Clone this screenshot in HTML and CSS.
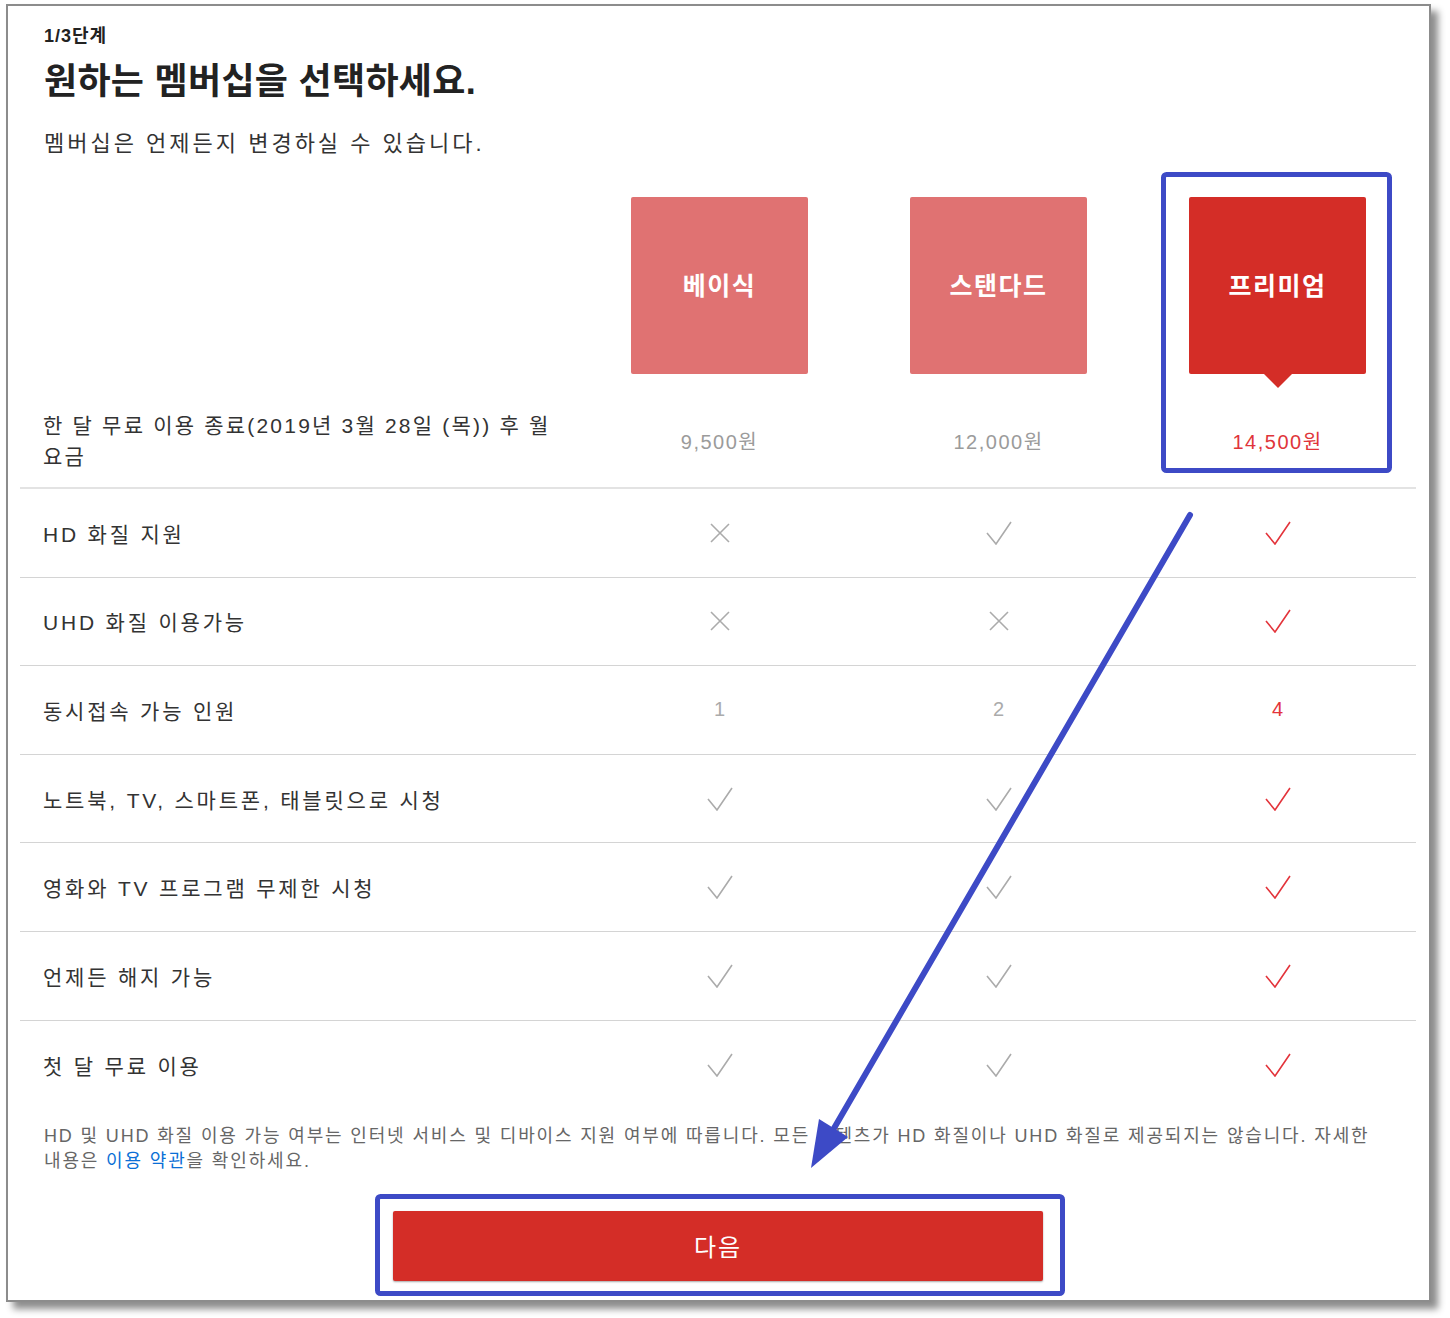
FILE: index.html
```html
<!DOCTYPE html>
<html lang="ko">
<head>
<meta charset="utf-8">
<title>멤버십 선택</title>
<link rel="stylesheet" href="styles.css">
</head>
<body>
<div class="frame">
  <div class="head">
    <div class="step">1/3단계</div>
    <h1 class="title">원하는 멤버십을 선택하세요.</h1>
    <p class="sub">멤버십은 언제든지 변경하실 수 있습니다.</p>
  </div>
  <div class="table">
    <div class="row plans">
      <div class="label"></div>
      <div class="cell"><div class="plan">베이식</div></div>
      <div class="cell"><div class="plan">스탠다드</div></div>
      <div class="cell"><div class="plan on">프리미엄</div></div>
    </div>
    <div class="row price">
      <div class="label tight">한 달 무료 이용 종료(2019년 3월 28일 (목)) 후 월<br>요금</div>
      <div class="cell val">9,500원</div>
      <div class="cell val">12,000원</div>
      <div class="cell val red">14,500원</div>
    </div>
    <div class="row feat">
      <div class="label">HD 화질 지원</div>
      <div class="cell gray"><svg class="x" width="20" height="20" viewBox="0 0 20 20"><path d="M1 1L19 19M19 1L1 19"/></svg></div>
      <div class="cell gray"><svg class="ck" width="26" height="24" viewBox="0 0 26 24"><path d="M1 12L10 23L25 1"/></svg></div>
      <div class="cell red"><svg class="ck" width="26" height="24" viewBox="0 0 26 24"><path d="M1 12L10 23L25 1"/></svg></div>
    </div>
    <div class="row feat">
      <div class="label">UHD 화질 이용가능</div>
      <div class="cell gray"><svg class="x" width="20" height="20" viewBox="0 0 20 20"><path d="M1 1L19 19M19 1L1 19"/></svg></div>
      <div class="cell gray"><svg class="x" width="20" height="20" viewBox="0 0 20 20"><path d="M1 1L19 19M19 1L1 19"/></svg></div>
      <div class="cell red"><svg class="ck" width="26" height="24" viewBox="0 0 26 24"><path d="M1 12L10 23L25 1"/></svg></div>
    </div>
    <div class="row feat">
      <div class="label">동시접속 가능 인원</div>
      <div class="cell gray num">1</div>
      <div class="cell gray num">2</div>
      <div class="cell red num">4</div>
    </div>
    <div class="row feat">
      <div class="label">노트북, TV, 스마트폰, 태블릿으로 시청</div>
      <div class="cell gray"><svg class="ck" width="26" height="24" viewBox="0 0 26 24"><path d="M1 12L10 23L25 1"/></svg></div>
      <div class="cell gray"><svg class="ck" width="26" height="24" viewBox="0 0 26 24"><path d="M1 12L10 23L25 1"/></svg></div>
      <div class="cell red"><svg class="ck" width="26" height="24" viewBox="0 0 26 24"><path d="M1 12L10 23L25 1"/></svg></div>
    </div>
    <div class="row feat">
      <div class="label">영화와 TV 프로그램 무제한 시청</div>
      <div class="cell gray"><svg class="ck" width="26" height="24" viewBox="0 0 26 24"><path d="M1 12L10 23L25 1"/></svg></div>
      <div class="cell gray"><svg class="ck" width="26" height="24" viewBox="0 0 26 24"><path d="M1 12L10 23L25 1"/></svg></div>
      <div class="cell red"><svg class="ck" width="26" height="24" viewBox="0 0 26 24"><path d="M1 12L10 23L25 1"/></svg></div>
    </div>
    <div class="row feat">
      <div class="label">언제든 해지 가능</div>
      <div class="cell gray"><svg class="ck" width="26" height="24" viewBox="0 0 26 24"><path d="M1 12L10 23L25 1"/></svg></div>
      <div class="cell gray"><svg class="ck" width="26" height="24" viewBox="0 0 26 24"><path d="M1 12L10 23L25 1"/></svg></div>
      <div class="cell red"><svg class="ck" width="26" height="24" viewBox="0 0 26 24"><path d="M1 12L10 23L25 1"/></svg></div>
    </div>
    <div class="row feat last">
      <div class="label">첫 달 무료 이용</div>
      <div class="cell gray"><svg class="ck" width="26" height="24" viewBox="0 0 26 24"><path d="M1 12L10 23L25 1"/></svg></div>
      <div class="cell gray"><svg class="ck" width="26" height="24" viewBox="0 0 26 24"><path d="M1 12L10 23L25 1"/></svg></div>
      <div class="cell red"><svg class="ck" width="26" height="24" viewBox="0 0 26 24"><path d="M1 12L10 23L25 1"/></svg></div>
    </div>
  </div>
  <p class="note">HD 및 UHD 화질 이용 가능 여부는 인터넷 서비스 및 디바이스 지원 여부에 따릅니다. 모든 콘텐츠가 HD 화질이나 UHD 화질로 제공되지는 않습니다. 자세한<br>내용은 <a href="#">이용 약관</a>을 확인하세요.</p>
  <div class="actions"><button class="next" type="button">다음</button></div>
</div>
<svg class="annot" width="1450" height="1318" viewBox="0 0 1450 1318">
  <rect x="1163.5" y="174.5" width="226" height="296" rx="3" fill="none" stroke="#3d4ac6" stroke-width="5"/>
  <rect x="377.5" y="1196.5" width="685" height="97" rx="3" fill="none" stroke="#3d4ac6" stroke-width="5"/>
  <line x1="1190" y1="515" x2="833" y2="1130" stroke="#3d4ac6" stroke-width="6" stroke-linecap="round"/>
  <polygon points="811,1168 819,1119 848,1137" fill="#3d4ac6"/>
</svg>
</body>
</html>
```

FILE: styles.css
```css
html, body {
  margin: 0;
  padding: 0;
  background: #fff;
}
body {
  width: 1450px;
  height: 1318px;
  overflow: hidden;
  position: relative;
  font-family: "Liberation Sans", "Noto Sans CJK KR", sans-serif;
}
.frame {
  margin: 4px 0 0 6px;
  width: 1425px;
  box-sizing: border-box;
  border: 2px solid #8c8c8c;
  box-shadow: 7px 7px 7px rgba(0, 0, 0, 0.45);
  padding: 20px 13px 19px 12px;
  background: #fff;
}
.head {
  padding-left: 24px;
}
.step {
  font-size: 18px;
  font-weight: bold;
  line-height: 20px;
  color: #222;
  letter-spacing: 1px;
}
.title {
  margin: 14px 0 0;
  font-size: 36px;
  line-height: 44px;
  font-weight: bold;
  color: #222;
  letter-spacing: 0.3px;
}
.sub {
  margin: 25px 0 0;
  font-size: 22px;
  line-height: 30px;
  color: #333;
  letter-spacing: 3px;
}
.row {
  display: grid;
  grid-template-columns: 560px repeat(3, 279px);
  align-items: center;
}
.cell {
  display: flex;
  justify-content: center;
  align-items: center;
}
.label {
  padding-left: 23px;
  font-size: 21px;
  line-height: 31px;
  color: #333;
  letter-spacing: 2.8px;
  white-space: nowrap;
}
.label.tight {
  letter-spacing: 2.2px;
}
.plans {
  margin-top: 38px;
  height: 177px;
}
.plan {
  width: 177px;
  height: 177px;
  background: #e07272;
  color: #fff;
  font-size: 25px;
  font-weight: bold;
  letter-spacing: 1.5px;
  display: flex;
  align-items: center;
  justify-content: center;
  padding-bottom: 4px;
  box-sizing: border-box;
  border-radius: 2px;
  position: relative;
}
.plan.on {
  background: #d42d27;
}
.plan.on::after {
  content: "";
  position: absolute;
  left: 50%;
  top: 100%;
  margin-left: -14px;
  border-left: 14px solid transparent;
  border-right: 14px solid transparent;
  border-top: 14px solid #d42d27;
}
.price {
  margin-top: 20px;
  height: 93px;
  border-bottom: 2px solid #e3e3e3;
}
.val {
  font-size: 20px;
  color: #9b9b9b;
  letter-spacing: 1.5px;
}
.val.red {
  color: #e0353a;
}
.feat {
  height: 87.6px;
  border-bottom: 1px solid #d4d4d4;
}
.feat .label {
  padding-top: 3px;
}
.feat.last {
  height: 88px;
  border-bottom: none;
}
.gray {
  color: #ababab;
}
.red {
  color: #e3343b;
}
.num {
  font-size: 20px;
}
.ck path,
.x path {
  fill: none;
  stroke: currentColor;
  stroke-width: 1.6;
}
.note {
  margin: 15px 0 0;
  padding-left: 24px;
  font-size: 18px;
  line-height: 25px;
  color: #666;
  letter-spacing: 1.85px;
  white-space: nowrap;
}
.note a {
  color: #0b6fd6;
  text-decoration: none;
}
.actions {
  display: flex;
  justify-content: center;
  margin-top: 37px;
}
.next {
  width: 650px;
  height: 70px;
  background: #d42d27;
  color: #fff;
  border: 0;
  border-radius: 2px;
  font-family: inherit;
  font-size: 24px;
  letter-spacing: 2px;
  box-shadow: 0 1px 2px rgba(0, 0, 0, 0.35);
}
.annot {
  position: absolute;
  left: 0;
  top: 0;
  pointer-events: none;
}
```
